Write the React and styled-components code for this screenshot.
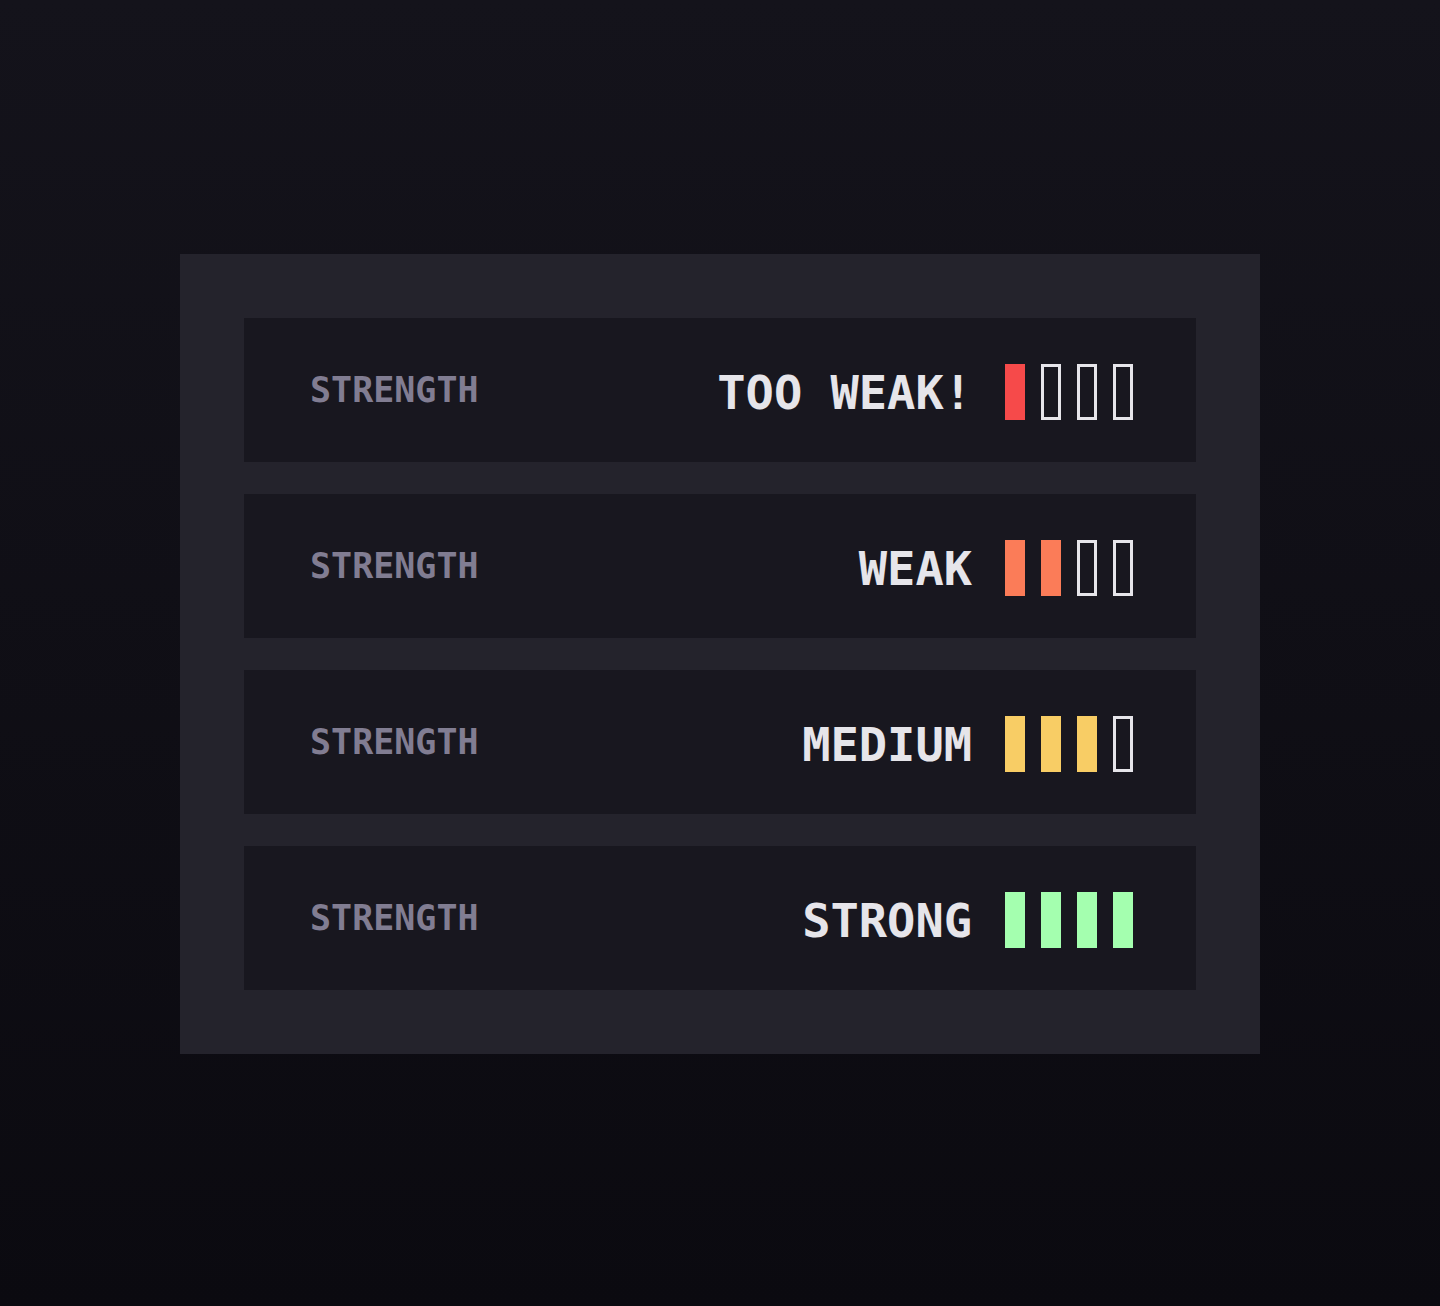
import React from "react";
import styled, { createGlobalStyle } from "styled-components";

const Global = createGlobalStyle`
  html, body { margin: 0; padding: 0; }
  body { background: #0b0a10; }
  * { box-sizing: border-box; }
`;

const Page = styled.main`
  min-height: 100vh;
  padding-top: 2px;
  display: flex;
  align-items: center;
  justify-content: center;
  background: linear-gradient(180deg, #14131b 0%, #0b0a10 100%);
  font-family: "DejaVu Sans Mono", "Liberation Mono", monospace;
`;

const Card = styled.section`
  width: 1080px;
  padding: 64px;
  background: #24232c;
  display: flex;
  flex-direction: column;
  gap: 32px;
`;

const Row = styled.div`
  height: 144px;
  background: #18171f;
  padding: 0 63px 0 66px;
  display: flex;
  align-items: center;
  justify-content: space-between;
`;

const Label = styled.span`
  font-size: 35px;
  font-weight: 700;
  color: #817d92;
`;

const Right = styled.div`
  display: flex;
  align-items: center;
  gap: 33px;
  padding-top: 4px;
`;

const Level = styled.span`
  font-size: 47px;
  font-weight: 700;
  color: #e6e5ea;
  white-space: pre;
`;

const Bars = styled.div`
  display: flex;
  gap: 16px;
`;

const Bar = styled.span`
  width: 20px;
  height: 56px;
  background: ${(p) => (p.$on ? p.$color : "transparent")};
  border: 3px solid ${(p) => (p.$on ? p.$color : "#e6e5ea")};
`;

const levels = [
  { text: "TOO WEAK!", n: 1, color: "#f64a4a" },
  { text: "WEAK", n: 2, color: "#fb7c58" },
  { text: "MEDIUM", n: 3, color: "#f8cd65" },
  { text: "STRONG", n: 4, color: "#a4ffaf" },
];

export default function App() {
  return (
    <>
      <Global />
      <Page>
        <Card>
          {levels.map((l) => (
            <Row key={l.text}>
              <Label>STRENGTH</Label>
              <Right>
                <Level>{l.text}</Level>
                <Bars>
                  {[0, 1, 2, 3].map((i) => (
                    <Bar key={i} $on={i < l.n} $color={l.color} />
                  ))}
                </Bars>
              </Right>
            </Row>
          ))}
        </Card>
      </Page>
    </>
  );
}
